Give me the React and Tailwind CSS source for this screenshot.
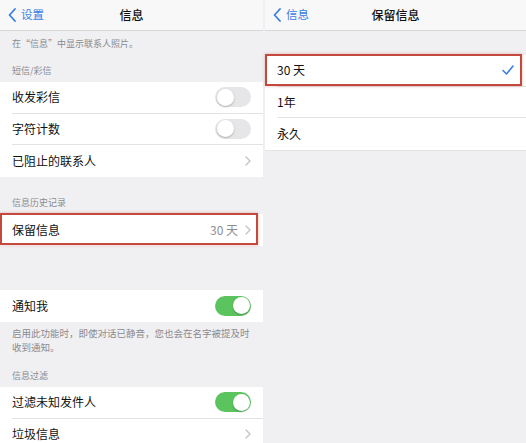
import React from "react";

const font = { fontFamily: '"Noto Sans CJK SC", "Noto Sans", sans-serif' };

function NavChevron() {
  return (
    <svg width="8" height="14" viewBox="0 0 8 14" className="shrink-0">
      <polyline points="7,1 1.5,7 7,13" fill="none" stroke="#3a7ee4" strokeWidth="1.8" strokeLinecap="round" strokeLinejoin="round" />
    </svg>
  );
}

function RowChevron() {
  return (
    <svg width="6" height="10" viewBox="0 0 6 10" className="shrink-0">
      <polyline points="1,1 5,5 1,9" fill="none" stroke="#c4c4c8" strokeWidth="1.4" strokeLinecap="round" strokeLinejoin="round" />
    </svg>
  );
}

function Toggle({ on }) {
  return (
    <div
      className={`w-[36px] h-[20px] rounded-full flex items-center px-[1.5px] ${
        on ? "bg-[#5cc45e] justify-end" : "bg-[#e6e6e9] justify-start"
      }`}
    >
      <div className="w-[17px] h-[17px] rounded-full bg-white shadow-[0_1px_2px_rgba(0,0,0,0.25)]" />
    </div>
  );
}

function NavBar({ back, title }) {
  return (
    <div className="h-[31px] shrink-0 bg-[#f8f8f9] border-b border-[#d8d8dc] relative flex items-center px-[8px]">
      <div className="flex items-center gap-[5px] text-[11.5px] text-[#3a7ee4]">
        <NavChevron />
        <span>{back}</span>
      </div>
      <div className="absolute inset-0 flex items-center justify-center text-[12px] font-medium text-[#111]">
        {title}
      </div>
    </div>
  );
}

function Row({ label, right, last }) {
  return (
    <div className="h-[31.5px] shrink-0 bg-white pl-[12px] flex">
      <div className={`flex-1 flex items-center justify-between pr-[12px] ${last ? "" : "border-b border-[#e3e3e6]"}`}>
        <span className="text-[12px] text-[#111]">{label}</span>
        {right}
      </div>
    </div>
  );
}

function SectionHeader({ text, height }) {
  return (
    <div className={`${height} shrink-0 flex items-end pb-[5px] px-[12px]`}>
      <span className="text-[9px] leading-[12px] text-[#8a8a8f]">{text}</span>
    </div>
  );
}

function Highlight({ right = "right-0" }) {
  return (
    <div className={`absolute left-0 ${right} -top-[1px] bottom-[1px] border-[2.5px] border-[#c3493f] shadow-[0_0_3px_rgba(200,80,60,0.4)] pointer-events-none`} />
  );
}

export default function App() {
  return (
    <div className="w-[526px] h-[443px] overflow-hidden bg-[#f0f0f3] flex gap-[2px]" style={font}>
      {/* 左侧：信息设置 */}
      <div className="w-[263px] shrink-0 flex flex-col">
        <NavBar back="设置" title="信息" />
        <div className="h-[25px] shrink-0 flex items-center px-[12px]">
          <span className="text-[9px] text-[#8a8a8f]">在“信息”中显示联系人照片。</span>
        </div>
        <SectionHeader text="短信/彩信" height="h-[26px]" />
        <Row label="收发彩信" right={<Toggle />} />
        <Row label="字符计数" right={<Toggle />} />
        <Row label="已阻止的联系人" right={<RowChevron />} last />

        <SectionHeader text="信息历史记录" height="h-[37.5px]" />
        <div className="relative">
          <Row
            label="保留信息"
            last
            right={
              <div className="flex items-center gap-[7px]">
                <span className="text-[12px] text-[#8e8e93]">30 天</span>
                <RowChevron />
              </div>
            }
          />
          <Highlight right="right-[5px]" />
        </div>

        <div className="h-[44.5px] shrink-0" />
        <Row label="通知我" right={<Toggle on />} last />
        <div className="pt-[4px] px-[12px] shrink-0 text-[9.5px] leading-[14px] text-[#8a8a8f] whitespace-nowrap">
          <div>启用此功能时，即使对话已静音，您也会在名字被提及时</div>
          <div>收到通知。</div>
        </div>
        <SectionHeader text="信息过滤" height="h-[33.5px]" />
        <Row label="过滤未知发件人" right={<Toggle on />} />
        <Row label="垃圾信息" right={<RowChevron />} last />
      </div>

      {/* 右侧：保留信息 */}
      <div className="flex-1 flex flex-col">
        <NavBar back="信息" title="保留信息" />
        <div className="h-[24px] shrink-0" />
        <div className="relative">
          <Row
            label="30 天"
            right={
              <svg width="12" height="10" viewBox="0 0 12 10">
                <polyline points="1,5.5 4.5,9 11,1" fill="none" stroke="#3a7ee4" strokeWidth="1.6" strokeLinecap="round" strokeLinejoin="round" />
              </svg>
            }
          />
          <Highlight right="right-[4px]" />
        </div>
        <Row label="1年" />
        <Row label="永久" last />
        <div className="border-t border-[#e3e3e6]" />
      </div>
    </div>
  );
}
